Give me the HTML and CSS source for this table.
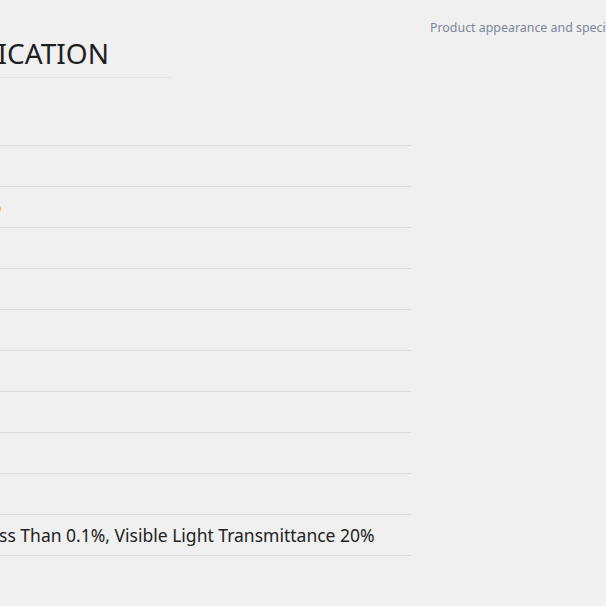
FILE: index.html
```html
<!DOCTYPE html>
<html lang="en">
<head>
<meta charset="utf-8">
<title>Specification</title>
<link rel="stylesheet" href="styles.css">
</head>
<body>
<div class="page">
  <section class="spec">
    <h2 class="spec-title">SPECIFICATION</h2>
    <div class="spec-table">
      <div class="row"><span class="label"></span><span class="value"></span></div>
      <div class="row"><span class="label"></span><span class="value"></span></div>
      <div class="row"><span class="label"></span><span class="value"><span class="marker"></span></span></div>
      <div class="row"><span class="label"></span><span class="value"></span></div>
      <div class="row"><span class="label"></span><span class="value"></span></div>
      <div class="row"><span class="label"></span><span class="value"></span></div>
      <div class="row"><span class="label"></span><span class="value"></span></div>
      <div class="row"><span class="label"></span><span class="value"></span></div>
      <div class="row"><span class="label"></span><span class="value"></span></div>
      <div class="row"><span class="label"></span><span class="value"></span></div>
      <div class="row"><span class="label"></span><span class="value">Less Than 0.1%, Visible Light Transmittance 20%</span></div>
    </div>
  </section>
  <aside class="note">Product appearance and specifications are subject to change without notice.</aside>
</div>
</body>
</html>
```

FILE: styles.css
```css
html, body {
  margin: 0;
  padding: 0;
  background: #f0f0f0;
  overflow: hidden;
}
body {
  font-family: "Noto Sans", "Open Sans", sans-serif;
  width: 606px;
  height: 606px;
}
.page {
  display: flex;
  align-items: flex-start;
  gap: 19px;
  margin-left: -200px;
  width: 1400px;
}
.spec {
  flex: none;
  width: 611px;
  padding-top: 34px;
}
.spec-title {
  margin: 0;
  width: 371px;
  font-size: 28px;
  line-height: 38px;
  font-weight: 400;
  color: #1f1f1f;
  padding-bottom: 5px;
  border-bottom: 1px solid #e4e4e4;
  text-indent: 108px;
  box-sizing: border-box;
}
.spec-table {
  margin-top: 27px;
}
.row {
  display: grid;
  grid-template-columns: 180px 1fr;
  height: 40px;
  align-items: center;
  border-bottom: 1px solid #dcdcdc;
  font-size: 17.5px;
  color: #222;
}
.value {
  white-space: nowrap;
}
.marker {
  display: inline-block;
  width: 6px;
  height: 6px;
  border-radius: 50%;
  background: #f7b04a;
  margin-left: 15px;
  vertical-align: middle;
}
.note {
  flex: none;
  white-space: nowrap;
  padding-top: 19px;
  font-size: 12.4px;
  line-height: 18px;
  color: #7a8798;
}
```
